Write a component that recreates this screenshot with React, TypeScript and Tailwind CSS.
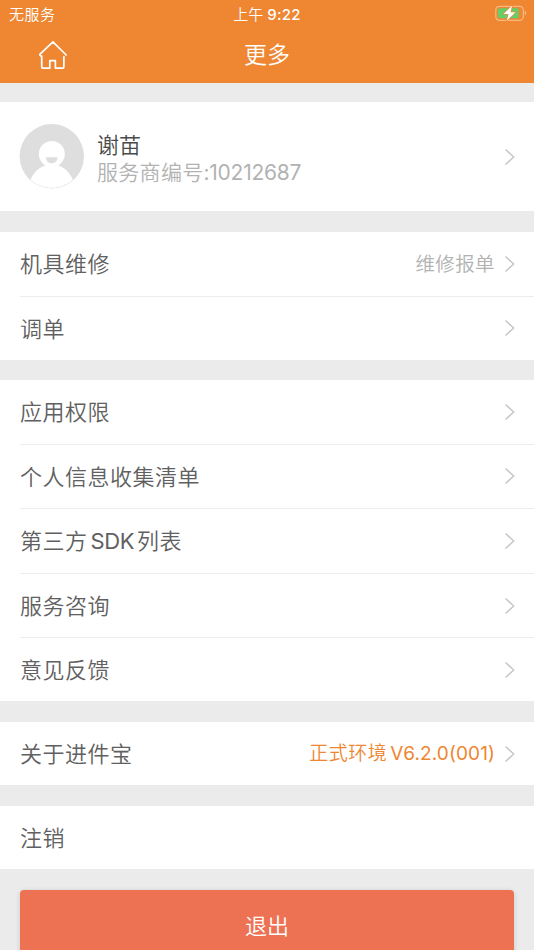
import type { ReactNode } from 'react';

type RowProps = {
  label: ReactNode;
  extra?: ReactNode;
  arrow?: boolean;
  last?: boolean;
};

function Chevron() {
  return (
    <svg width="12" height="18" viewBox="0 0 12 18" fill="none" className="shrink-0">
      <path d="M1.5 1.5L9.7 9L1.5 16.5" stroke="#c7c7c7" strokeWidth="1.5" />
    </svg>
  );
}

function Row({ label, extra, arrow = true, last = false }: RowProps) {
  return (
    <div
      className={
        last
          ? 'ml-5 flex h-[63px] items-center justify-between pr-[18px]'
          : 'ml-5 flex h-[64.6px] items-center justify-between border-b border-[#ececec] pr-[18px]'
      }
    >
      <span className="pt-[2px] text-[22px] tracking-[0.5px] text-[#606060]">{label}</span>
      <div className="flex items-center gap-[9px]">
        {extra}
        {arrow && <Chevron />}
      </div>
    </div>
  );
}

function StatusBar() {
  return (
    <div className="grid h-7 grid-cols-3 items-center pl-[9px] pr-[7px] text-[15px] leading-none text-white">
      <span className="tracking-[0.5px]">无服务</span>
      <span className="flex justify-center gap-1 pr-0.5">
        <span>上午</span>
        <span className="font-medium tracking-[0.2px]">9:22</span>
      </span>
      <svg width="32" height="16" viewBox="0 0 32 16" fill="none" className="-mt-0.5 justify-self-end">
        <rect x="0.8" y="1.3" width="27.5" height="14" rx="3.6" stroke="#f6b982" strokeWidth="1.2" />
        <rect x="2.8" y="3.2" width="21" height="10" rx="2" fill="#65ce68" />
        <path d="M29.7 6v4.4c1-.4 1.6-1.2 1.6-2.2S30.7 6.4 29.7 6z" fill="#f6b982" />
        <path
          d="M17.2 0.5L8.5 9h5L11.8 15.8L20.5 7.2h-5z"
          fill="white"
          stroke="#ee8632"
          strokeWidth="1.2"
          paintOrder="stroke"
        />
      </svg>
    </div>
  );
}

function NavBar() {
  return (
    <div className="grid h-[55px] grid-cols-3 items-center text-white">
      <svg width="30" height="30" viewBox="0 0 30 30" fill="none" className="-mt-0.5 ml-[38px]">
        <path
          d="M28.2 15L15 1.8L2 14.2c-.5 1 .2 1.9 1.7 1.9V26.5c0 1 .6 1.7 1.6 1.7h6.5v-7.5h5.6v7.5h6.8c1 0 1.7-.7 1.7-1.7V16.7"
          stroke="white"
          strokeWidth="1.7"
          strokeLinecap="round"
          strokeLinejoin="round"
        />
      </svg>
      <h1 className="-mt-px text-center text-[23px] leading-none">更多</h1>
    </div>
  );
}

function Avatar() {
  return (
    <svg width="65" height="65" viewBox="0 0 65 65" className="shrink-0">
      <circle cx="32.8" cy="32.3" r="32.2" fill="#dedede" />
      <path d="M11.4 55.5C16 46 23 40.5 32.8 40.5S49 46 54 55.5C47 61.7 40 63.8 32.8 63.8S18 61.7 11.4 55.5z" fill="white" />
      <circle cx="32.8" cy="30" r="13" fill="white" />
      <path d="M27 33.2H38.5c0 3.8-2.3 6-5.8 6s-5.7-2.2-5.7-6z" fill="#dedede" />
    </svg>
  );
}

export default function App() {
  return (
    <main className="flex h-[950px] w-full flex-col overflow-hidden bg-[#ebebeb] font-['Inter','Noto_Sans_CJK_SC',sans-serif] font-[350]">
      <header className="h-[83px] shrink-0 bg-[#ee8632]">
        <StatusBar />
        <NavBar />
      </header>

      <section className="mt-[19px] flex h-[109px] shrink-0 items-center bg-white pl-[19px] pr-[18px]">
        <Avatar />
        <div className="ml-[13px] flex-1 pt-[4px]">
          <p className="text-[22px] leading-7 text-[#4a4a4a]">谢苗</p>
          <p className="text-[21px] leading-7 tracking-[0.3px] text-[#b2b2b2]">
            服务商编号<span className="font-normal tracking-[-0.25px]">:10212687</span>
          </p>
        </div>
        <Chevron />
      </section>

      <section className="mt-[21px] shrink-0 bg-white">
        <Row
          label="机具维修"
          extra={<span className="pt-px text-[19.5px] tracking-[0.4px] text-[#b2b2b2]">维修报单</span>}
        />
        <Row label="调单" last />
      </section>

      <section className="mt-[20.4px] shrink-0 bg-white">
        <Row label="应用权限" />
        <Row label="个人信息收集清单" />
        <Row
          label={
            <>
              第三方<span className="mx-[3px] font-normal tracking-[-0.4px]">SDK</span>列表
            </>
          }
        />
        <Row label="服务咨询" />
        <Row label="意见反馈" last />
      </section>

      <section className="mt-[20.8px] shrink-0 bg-white">
        <Row
          label="关于进件宝"
          extra={
            <span className="pt-[2px] text-[19px] tracking-[0.5px] text-[#ee8632]">
              正式环境<span className="ml-[3px] font-normal tracking-[0.1px]">V6.2.0(001)</span>
            </span>
          }
          last
        />
      </section>

      <section className="mt-[20.8px] shrink-0 bg-white">
        <Row label="注销" arrow={false} last />
      </section>

      <button className="mx-5 mt-[21.4px] h-[71px] shrink-0 rounded-[4px] bg-[#ed7254] pt-px text-[22px] text-white shadow-[0_1px_5px_rgba(0,0,0,0.15)]">
        退出
      </button>
    </main>
  );
}
